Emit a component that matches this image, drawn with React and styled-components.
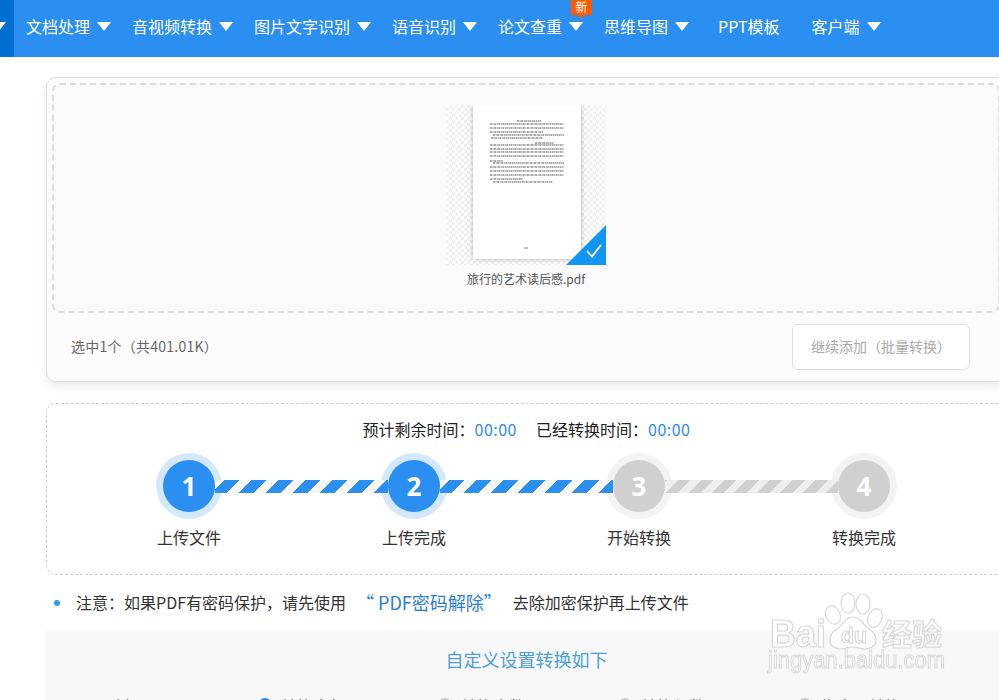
import React from "react";
import styled, { createGlobalStyle } from "styled-components";

const Global = createGlobalStyle`
  html, body { margin: 0; padding: 0; width: 999px; height: 700px; overflow: hidden; background: #fff; }
  body { font-family: "Noto Sans CJK SC", "Noto Sans", sans-serif; color: #333; position: relative; }
`;

const Nav = styled.nav`
  display: flex; align-items: center; height: 57px; background: #2a8ff0; color: #fff; overflow: hidden;
`;
const NavEdge = styled.div`
  box-sizing: border-box; width: 14px; height: 57px; flex: none; background: #006fd2; margin-right: 12px; padding-bottom: 6px;
  display: flex; align-items: center; overflow: hidden;
`;
const Arrow = styled.i`
  display: block; flex: none; width: 0; height: 0; margin-left: 7px; margin-top: 2px;
  border-left: 7px solid transparent; border-right: 7px solid transparent; border-top: 9px solid #fff;
  ${p => p.$cut ? "margin-left:-8px;" : ""}
`;
const NavItem = styled.div`
  box-sizing: border-box; display: flex; align-items: center; flex: none; position: relative; font-size: 16px; line-height: 24px;
  margin-right: ${p => p.$mr ?? 21}px; margin-left: ${p => p.$ml ?? 0}px; height: 57px; padding-bottom: 6px;
`;
const Badge = styled.span`
  position: absolute; left: 73px; top: 0; width: 21px; height: 15px; background: #ff5a00; color: #fff;
  font-size: 12px; line-height: 13px; text-align: center;
  &::after { content: ""; position: absolute; left: 7px; top: 15px; border-left: 3px solid transparent; border-right: 3px solid transparent; border-top: 4px solid #ff5a00; }
`;

const Main = styled.main`
  margin: 20px 0 0 46px; width: 960px;
`;
const UploadCard = styled.section`
  box-sizing: border-box; height: 305px; padding: 5px 5px 0; border: 1px solid #ddd; border-radius: 10px; background: #fcfcfc;
  box-shadow: 0 5px 10px rgba(0,0,0,.08); display: flex; flex-direction: column;
`;
const DropZone = styled.div`
  box-sizing: border-box; height: 230px; flex: none; border: 2px dashed #ddd; border-radius: 8px; background: #fafafa;
  display: flex; flex-direction: column; align-items: center; padding-top: 20px;
`;
const Thumb = styled.div`
  position: relative; width: 160px; height: 160px; box-sizing: border-box; padding-left: 27px; overflow: hidden;
  background: repeating-conic-gradient(#f0f0f0 0 25%, #fff 0 50%) 0 0 / 6px 6px;
`;
const Sheet = styled.div`
  width: 108px; height: 154px; background: #fff; box-shadow: 0 0 5px rgba(0,0,0,.3);
`;
const Corner = styled.div`
  position: absolute; right: 0; bottom: 0; width: 40px; height: 40px; background: #1296f5;
  clip-path: polygon(100% 0, 100% 100%, 0 100%);
  svg { position: absolute; right: 3px; bottom: 5px; }
`;
const Caption = styled.div`
  margin-top: 4px; font-size: 12px; line-height: 20px; color: #555;
`;
const CardFoot = styled.div`
  flex: 1; display: flex; align-items: center; justify-content: space-between; padding: 0 30px 0 19px;
`;
const Count = styled.span`
  font-size: 14px; color: #666; letter-spacing: .25px; padding-bottom: 3px;
`;
const AddButton = styled.button`
  box-sizing: border-box; width: 178px; height: 46px; border: 1px solid #e0e0e0; border-radius: 6px; background: #fff;
  color: #aaa; font: 14px "Noto Sans CJK SC", "Noto Sans", sans-serif; padding: 0 0 3px; text-align: center;
`;

const Progress = styled.section`
  box-sizing: border-box; width: 961px; height: 172px; margin-top: 21px; border: 1px dashed #ccc; border-radius: 10px;
  padding-top: 13px;
`;
const TimeRow = styled.div`
  display: flex; justify-content: center; font-size: 16px; line-height: 24px; color: #222;
`;
const TimeGroup = styled.span`
  margin-right: ${p => p.$mr || 0}px;
`;
const TimeValue = styled.span`
  color: #2f8cf0; letter-spacing: .5px;
`;
const Steps = styled.div`
  display: grid; grid-template-columns: 52px 173px 52px 173px 52px 173px 52px; grid-template-rows: 52px 24px;
  row-gap: 13px; margin: 19px 0 0 116px;
`;
const Circle = styled.div`
  grid-row: 1; width: 52px; height: 52px; border-radius: 50%; display: flex; align-items: center; justify-content: center;
  background: ${p => p.$on ? "#2a8ff0" : "#d0d0d0"};
  box-shadow: 0 0 0 7px ${p => p.$on ? "#d4e8fc" : "#f3f3f3"};
  color: #fff; font-size: 26px; font-weight: 700; font-family: "Open Sans", "Noto Sans", sans-serif;
`;
const Bar = styled.div`
  grid-row: 1; align-self: center; height: 13px; position: relative; z-index: 1;
  background: ${p => p.$on
    ? "repeating-linear-gradient(-45deg, #2a8ff0 0 10px, #f8f8f8 10px 19.09px)"
    : "repeating-linear-gradient(-45deg, #d0d0d0 0 8.5px, #eee 8.5px 16.26px)"};
`;
const StepLabel = styled.div`
  grid-row: 2; grid-column: ${p => p.$col}; justify-self: center; white-space: nowrap; font-size: 16px; line-height: 24px; color: #333;
`;

const Note = styled.div`
  display: flex; align-items: center; height: 30px; margin: 12px 0 0 8px; font-size: 16px; color: #333; white-space: nowrap;
`;
const Dot = styled.i`
  width: 6px; height: 6px; border-radius: 50%; background: #2a9df4; margin: 2px 16px 0 0; flex: none;
`;
const NoteLink = styled.a`
  font-size: 18px; color: #2a7de0; margin: 0 11px 0 10px;
`;

const Settings = styled.section`
  width: 961px; height: 120px; box-sizing: border-box; margin-top: 13px; padding: 16px 0 0 30px; background: #f8f8f8;
`;
const SettingsTitle = styled.h3`
  margin: 0 0 22px -30px; font-weight: 400; font-size: 18px; line-height: 26px; text-align: center; color: #4a9fe0;
`;
const OptionRow = styled.div`
  display: flex; align-items: center; font-size: 16px; line-height: 24px; color: #333;
`;
const RowLabel = styled.span`
  width: 182px; flex: none;
`;
const Option = styled.label`
  width: 180px; flex: none; display: flex; align-items: center; gap: 9px;
`;
const Radio = styled.i`
  box-sizing: border-box; width: 14px; height: 14px; border-radius: 50%; flex: none; margin-bottom: 2px;
  border: 2px solid ${p => p.$on ? "#2a8ff0" : "#c8c8c8"};
`;

const Watermark = styled.svg`
  position: absolute; left: 760px; top: 585px; width: 200px; height: 100px; pointer-events: none; filter: blur(.35px);
`;

const lines = [
  [44, 68, 16], [17, 91, 19], [17, 91, 23], [17, 70, 27], [20, 91, 30], [18, 70, 33],
  [62, 81, 38], [17, 91, 40], [17, 91, 44], [17, 91, 47], [17, 91, 51], [17, 30, 56],
  [20, 91, 58], [17, 91, 62], [17, 91, 66], [17, 91, 70], [17, 50, 74], [20, 80, 77],
];

const steps = [
  ["1", "上传文件", true],
  ["2", "上传完成", true],
  ["3", "开始转换", false],
  ["4", "转换完成", false],
];

const Arrowed = ({ children, badge }) => (
  <NavItem>
    {children}
    <Arrow />
    {badge && <Badge>新</Badge>}
  </NavItem>
);

export default function App() {
  return (
    <>
      <Global />
      <Nav>
        <NavEdge><Arrow $cut /></NavEdge>
        <Arrowed>文档处理</Arrowed>
        <Arrowed>音视频转换</Arrowed>
        <Arrowed>图片文字识别</Arrowed>
        <Arrowed>语音识别</Arrowed>
        <Arrowed badge>论文查重</Arrowed>
        <Arrowed>思维导图</Arrowed>
        <NavItem $ml={8} $mr={32}>PPT模板</NavItem>
        <Arrowed>客户端</Arrowed>
      </Nav>
      <Main>
        <UploadCard>
          <DropZone>
            <Thumb>
              <Sheet>
                <svg width="108" height="154" viewBox="0 0 108 154">
                  {lines.map(([a, b, y]) => (
                    <line key={y} x1={a} x2={b} y1={y} y2={y} stroke="#555" strokeWidth="1.1" strokeDasharray="2 .6 1 .5" />
                  ))}
                  <line x1="51" x2="55" y1="143" y2="143" stroke="#888" strokeWidth="1" />
                </svg>
              </Sheet>
              <Corner>
                <svg width="18" height="18" viewBox="0 0 18 18" fill="none" stroke="#fff" strokeWidth="1.8">
                  <path d="M2 9l5 5.5L16 3" />
                </svg>
              </Corner>
            </Thumb>
            <Caption>旅行的艺术读后感.pdf</Caption>
          </DropZone>
          <CardFoot>
            <Count>选中1个（共401.01K）</Count>
            <AddButton>继续添加（批量转换）</AddButton>
          </CardFoot>
        </UploadCard>

        <Progress>
          <TimeRow>
            <TimeGroup $mr={19}>预计剩余时间：<TimeValue>00:00</TimeValue></TimeGroup>
            <TimeGroup>已经转换时间：<TimeValue>00:00</TimeValue></TimeGroup>
          </TimeRow>
          <Steps>
            {steps.map(([n, label, on], i) => (
              <React.Fragment key={n}>
                <Circle $on={on}>{n}</Circle>
                {i < 3 && <Bar $on={on} />}
              </React.Fragment>
            ))}
            {steps.map(([n, label], i) => (
              <StepLabel key={n} $col={i * 2 + 1}>{label}</StepLabel>
            ))}
          </Steps>
        </Progress>

        <Note>
          <Dot />
          注意：如果PDF有密码保护，请先使用
          <NoteLink>“ PDF密码解除”</NoteLink>
          去除加密保护再上传文件
        </Note>

        <Settings>
          <SettingsTitle>自定义设置转换如下</SettingsTitle>
          <OptionRow>
            <RowLabel>页码选择</RowLabel>
            <Option><Radio $on />转换全部页面</Option>
            <Option><Radio />转换奇数页面</Option>
            <Option><Radio />转换偶数页面</Option>
            <Option><Radio />指定页转换</Option>
          </OptionRow>
        </Settings>
      </Main>
      <Watermark viewBox="0 0 200 100">
        <g fill="rgba(255,255,255,.75)" stroke="#d8d8d8" strokeWidth="1.2">
          <ellipse cx="73" cy="30" rx="7" ry="9.5" transform="rotate(-25 73 30)" />
          <ellipse cx="88" cy="18" rx="7" ry="10" />
          <ellipse cx="103" cy="19" rx="7" ry="10" />
          <ellipse cx="115" cy="33" rx="7" ry="9.5" transform="rotate(25 115 33)" />
          <path d="M93 32c8 0 10 8 16 12 6 4 7 8 7 11 0 6-6 9-11 9-5 0-8-2-12-2s-7 2-12 2c-6 0-11-3-11-9 0-4 2-8 7-11 6-4 8-12 16-12z" />
          <text x="10" y="62" fontFamily="Liberation Sans, sans-serif" fontWeight="700" fontSize="38" textLength="56" lengthAdjust="spacingAndGlyphs">Bai</text>
          <text x="81" y="58" fontFamily="Liberation Sans, sans-serif" fontWeight="700" fontSize="22" textLength="26" lengthAdjust="spacingAndGlyphs">du</text>
          <text x="122" y="60" fontFamily="Noto Sans CJK SC, sans-serif" fontWeight="700" fontSize="30" textLength="60" lengthAdjust="spacingAndGlyphs">经验</text>
          <text x="8" y="83" fontFamily="Liberation Sans, sans-serif" fontSize="23" strokeWidth="1" textLength="177" lengthAdjust="spacingAndGlyphs">jingyan.baidu.com</text>
        </g>
      </Watermark>
    </>
  );
}
